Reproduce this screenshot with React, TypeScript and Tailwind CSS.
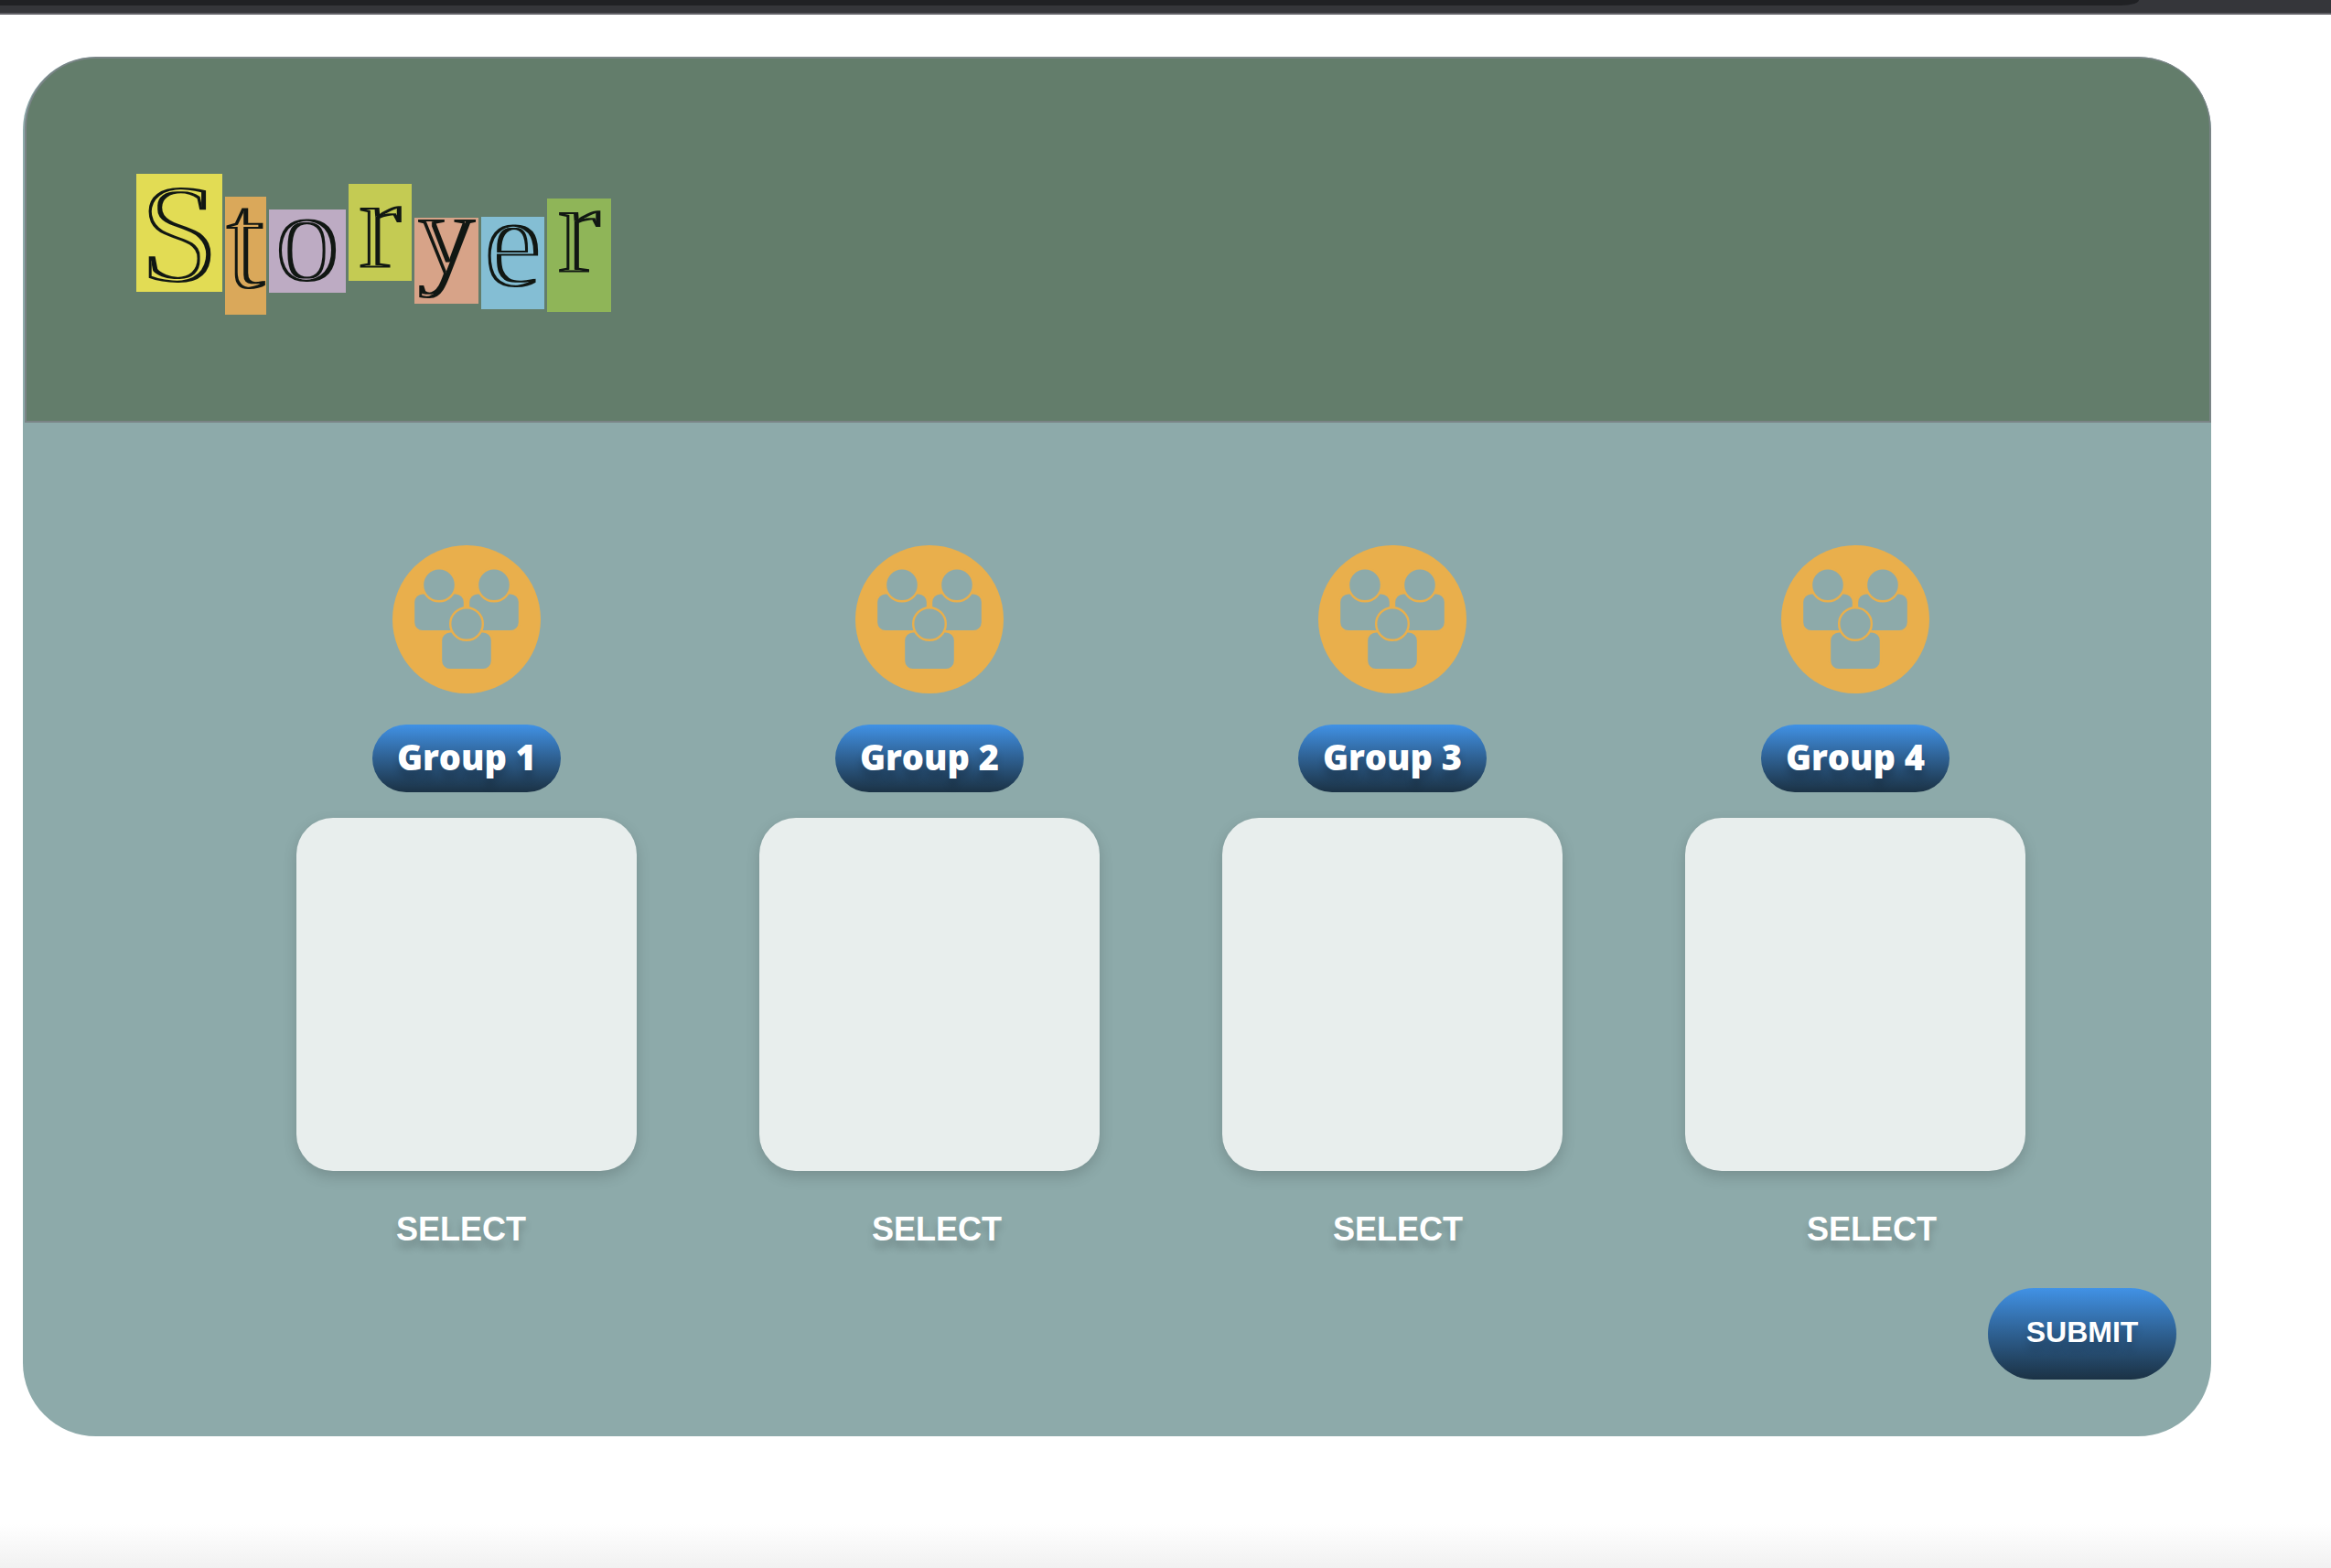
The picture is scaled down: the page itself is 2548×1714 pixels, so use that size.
const tiles = [
  { letter: 'S', box: 'w-[94px] h-[129px] mt-0 bg-[#e2dc54]', text: 'text-[154px] leading-[131px]' },
  { letter: 't', box: 'w-[45px] h-[129px] mt-[25px] bg-[#daa85a]', text: 'text-[154px] leading-[95px]' },
  { letter: 'o', box: 'w-[84px] h-[91px] mt-[39px] bg-[#bdabc3]', text: 'text-[142px] leading-[60px]' },
  { letter: 'r', box: 'w-[69px] h-[106px] mt-[11px] bg-[#c4cb53]', text: 'text-[142px] leading-[86px]' },
  { letter: 'y', box: 'w-[70px] h-[94px] mt-[48px] bg-[#d7a388]', text: 'text-[126px] leading-[38px]' },
  { letter: 'e', box: 'w-[69px] h-[101px] mt-[47px] bg-[#84bed4]', text: 'text-[142px] leading-[56px]' },
  { letter: 'r', box: 'w-[70px] h-[124px] mt-[27px] bg-[#8fb558]', text: 'text-[142px] leading-[64px]' },
];

const groups = ['Group 1', 'Group 2', 'Group 3', 'Group 4'];

/* Cuts a narrow channel out of the heavy strokes, giving an engraved face. */
function EngravedFilter() {
  return (
    <svg className="absolute size-0" aria-hidden="true">
      <filter
        id="engraved"
        x="-20%"
        y="-50%"
        width="140%"
        height="200%"
        colorInterpolationFilters="sRGB"
      >
        <feMorphology in="SourceGraphic" operator="dilate" radius="1 0" result="wide" />
        <feMorphology in="SourceAlpha" operator="erode" radius="3 2" result="core" />
        <feOffset in="core" dx="-1" dy="0" result="channel" />
        <feComposite in="wide" in2="channel" operator="out" />
      </filter>
    </svg>
  );
}

function Logo() {
  return (
    <h1
      className="flex items-start gap-[3px] font-['Liberation_Serif',serif] text-[#111713]"
      aria-label="Storyer"
    >
      {tiles.map((tile, i) => (
        <span key={i} className={`flex shrink-0 justify-center ${tile.box}`}>
          <span className={`[filter:url(#engraved)] ${tile.text}`}>{tile.letter}</span>
        </span>
      ))}
    </h1>
  );
}

function GroupIcon() {
  return (
    <svg viewBox="0 0 162 162" className="size-[162px]" aria-hidden="true">
      <circle cx="81" cy="81" r="81" fill="#e9af4c" />
      <g fill="#8daaaa" stroke="#e9af4c" strokeWidth="2.4">
        <rect x="23" y="52.3" width="56" height="42" rx="10" />
        <rect x="83" y="52.3" width="56" height="42" rx="10" />
        <circle cx="51" cy="43.3" r="18" />
        <circle cx="111" cy="43.3" r="18" />
        <rect x="53" y="94.3" width="56" height="42" rx="10" />
        <circle cx="81" cy="86" r="17.8" />
      </g>
    </svg>
  );
}

export default function App() {
  return (
    <div className="flex min-h-screen flex-col bg-white font-['Liberation_Sans',Arial,sans-serif]">
      <EngravedFilter />
      <div className="h-4 border-b-2 border-[#5f5f65] bg-[#35363a] pr-[210px]">
        <div className="h-1.5 rounded-br-[20px_6px] bg-[#202124]" />
      </div>

      <main className="mt-[46px] mr-[131px] ml-[25px] overflow-hidden rounded-[80px] bg-[#8daaaa]">
        <header className="ml-0.5 h-[400px] rounded-t-[78px] border-2 border-[#7a8486] bg-[#637d6b] pt-[126px] pl-[120px]">
          <Logo />
        </header>

        <section className="grid grid-cols-4 pt-[134px] pr-[136px] pl-[232px]">
          {groups.map((name) => (
            <div key={name} className="flex flex-col items-center">
              <GroupIcon />
              <button
                type="button"
                className="mt-[34px] h-[74px] w-[206px] rounded-full bg-linear-to-b from-[#4192e6] to-[#1b3245] pb-1 font-['Open_Sans',sans-serif] text-[38px] leading-10 font-extrabold text-white [text-shadow:0_8px_8px_rgba(0,0,0,0.2)]"
              >
                {name}
              </button>
              <div className="mt-7 h-[386px] w-[372px] rounded-[40px] bg-[#e8eeed] shadow-[0_6px_16px_rgba(0,0,0,0.16)]" />
            </div>
          ))}
        </section>

        <div className="mt-11 grid grid-cols-[520fr_504fr_518fr_142fr] justify-items-start pr-[300px] pl-[408px]">
          {groups.map((name) => (
            <button
              key={name}
              type="button"
              aria-label={`SELECT ${name}`}
              className="text-4xl leading-10 font-bold text-white [text-shadow:0_8px_8px_rgba(0,0,0,0.2)]"
            >
              SELECT
            </button>
          ))}
        </div>

        <div className="mt-11 flex justify-end pr-[38px] pb-[62px]">
          <button
            type="button"
            className="h-[100px] w-[206px] rounded-full bg-linear-to-b from-[#4192e6] to-[#1b3245] pb-1 text-[32px] leading-10 font-bold text-white [text-shadow:0_8px_8px_rgba(0,0,0,0.2)]"
          >
            SUBMIT
          </button>
        </div>
      </main>

      <div className="mt-auto h-12 bg-linear-to-b from-white to-[#f1f1f1]" />
    </div>
  );
}
